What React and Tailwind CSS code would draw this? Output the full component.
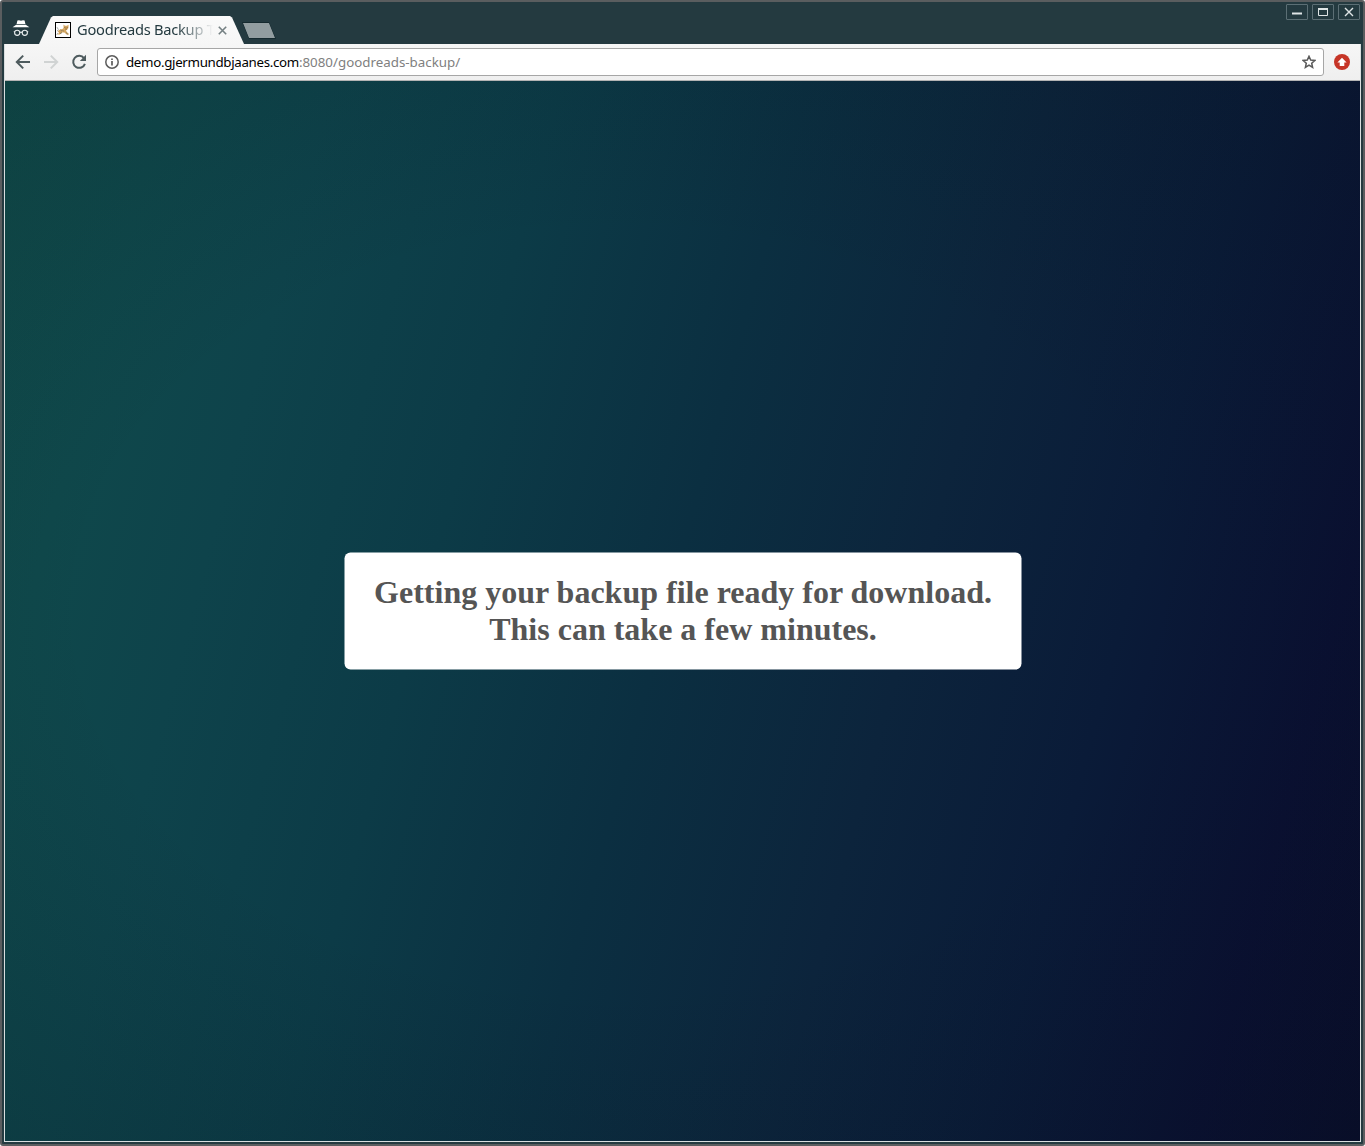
function IncognitoIcon() {
  return (
    <svg className="h-[18px] w-[18px] shrink-0" viewBox="0 0 18 18" fill="none">
      <path d="M5.4 0.6 L7 0.2 L9 0.7 L11 0.2 L12.6 0.6 L13.4 3.9 H4.6 Z" fill="#fff" />
      <path d="M4.2 4.8 H13.8 L17.4 7.3 H0.6 Z" fill="#fff" />
      <circle cx="5.2" cy="12.8" r="2.6" stroke="#e8eced" strokeWidth="1.1" />
      <circle cx="12.8" cy="12.8" r="2.6" stroke="#e8eced" strokeWidth="1.1" />
      <path d="M7.7 12.6 Q9 11.6 10.3 12.6 M1.8 11.6 L2.8 12 M16.2 11.6 L15.2 12" stroke="#e8eced" strokeWidth="1.1" />
    </svg>
  );
}

function TomcatIcon() {
  return (
    <svg className="h-4 w-4 shrink-0" viewBox="0 0 16 16">
      <rect width="16" height="16" fill="#000" />
      <rect x="1" y="1" width="14" height="14" fill="#fff" />
      <path d="M2 5.2 L3.4 7.6 M2 9 L3.4 8 M1.8 12.8 L3 10.8" stroke="#8b8b86" strokeWidth="0.7" fill="none" />
      <path d="M2.6 9.2 L5 7.4 L8 6.8 L8.6 5.6 L8.4 2.6 L10 3.8 L11.8 3.8 L13.6 2.8 L13.4 6 L12.4 7.6 L11 8.6 L11.8 10 L13.8 11.8 L13.4 13 L11.6 12.4 L9.4 10.4 L7 10.6 L4.8 12.6 H2.4 L4.2 10.8 Z" fill="#d8a963" />
      <path d="M5.4 7.8 L7 9.2 M7.6 8 L8.6 9.4 M5 11.6 L7 10.6 M11 10.6 L12.8 12.2" stroke="#76705f" strokeWidth="0.8" fill="none" />
      <path d="M9.4 5.4 H10.4 M11.7 5.4 H12.6 M10.3 7 H11.8" stroke="#5a4227" strokeWidth="0.7" fill="none" />
    </svg>
  );
}

function WindowButton({ children }) {
  return (
    <div className="flex h-4 w-[22px] items-center justify-center rounded-[1px] border border-[#5c6f75]">
      <svg className="h-[14px] w-5" viewBox="0 0 20 14" fill="none" stroke="#dfe5e6">
        {children}
      </svg>
    </div>
  );
}

function TitleBar() {
  return (
    <div className="flex h-[42px] justify-between">
      <div className="flex items-end pl-[8px]">
        <div className="flex h-[28px] items-start pt-[4px]">
          <IncognitoIcon />
        </div>
        <div className="ml-[9px] flex h-[28px] w-[206px] items-center bg-linear-to-b from-[#fafafa] to-[#f6f6f6] pl-[16px] [clip-path:polygon(0_100%,12px_5%,14px_0,191px_0,193px_5%,205px_100%)]">
          <TomcatIcon />
          <div className="mb-[2px] ml-[6px] h-5 w-[138px] overflow-hidden font-['Noto_Sans',sans-serif] text-[14.67px] leading-5 tracking-[-0.25px] whitespace-nowrap text-[#243a40] [mask-image:linear-gradient(to_right,#000_100px,transparent_136px)]">
            Goodreads Backup T
          </div>
          <svg className="ml-[3px] h-[9px] w-[9px] shrink-0" viewBox="0 0 9 9">
            <path d="M0.8 0.8 L8.2 8.2 M8.2 0.8 L0.8 8.2" stroke="#758083" strokeWidth="1.6" />
          </svg>
        </div>
        <div className="mb-[5px] -ml-[3px] h-[17px] w-[34px] bg-[#162a2f] p-px [clip-path:polygon(0_0,27px_0,34px_100%,7px_100%)]">
          <div className="h-full w-full bg-[#929da0] [clip-path:polygon(0_0,26px_0,32px_100%,6px_100%)]" />
        </div>
      </div>
      <div className="flex gap-1 pt-[2px] pr-px">
        <WindowButton>
          <path d="M5 8.5 H15" strokeWidth="2" />
        </WindowButton>
        <WindowButton>
          <path d="M5.5 4 V10.5 H14.5 V4" />
          <path d="M5 4 H15" strokeWidth="2" />
        </WindowButton>
        <WindowButton>
          <path d="M6 3 L14 11 M14 3 L6 11" strokeWidth="1.4" />
        </WindowButton>
      </div>
    </div>
  );
}

function Toolbar() {
  return (
    <div className="flex h-[37px] items-center border-b border-[#b4b4b4] bg-linear-to-b from-[#f6f6f6] to-[#efefef] pl-[10px]">
      <svg className="h-4 w-4" viewBox="0 0 16 16" fill="none" stroke="#4e5b5e" strokeWidth="2">
        <path d="M15 8 H2.2 M8.2 1.6 L1.8 8 L8.2 14.4" />
      </svg>
      <svg className="ml-3 h-4 w-4" viewBox="0 0 16 16" fill="none" stroke="#d0d3d3" strokeWidth="2">
        <path d="M1 8 H13.8 M7.8 1.6 L14.2 8 L7.8 14.4" />
      </svg>
      <svg className="ml-3 h-4 w-4" viewBox="0 0 16 16" fill="none">
        <path d="M13 4.2 A6 6 0 1 0 13.9 9.8" stroke="#4e5b5e" strokeWidth="2" />
        <path d="M15 0.8 V7 H8.8 Z" fill="#4e5b5e" />
      </svg>
      <div className="ml-[10px] flex h-7 w-[1227px] items-center rounded-[3px] border border-[#a6a6a6] bg-white pr-[7px] pl-[7px]">
        <svg className="h-[14px] w-[14px]" viewBox="0 0 14 14" fill="none">
          <circle cx="7" cy="7" r="6.2" stroke="#5c5c5c" strokeWidth="1.5" />
          <path d="M7 6 V10.4 M7 3.4 V4.9" stroke="#5c5c5c" strokeWidth="1.7" />
        </svg>
        <div className="ml-[7px] grow font-['Noto_Sans',sans-serif] text-[13.33px] leading-5 text-[#808080]">
          <span className="tracking-[-0.33px] text-black">demo.gjermundbjaanes.com</span>:8080/goodreads-backup/
        </div>
        <svg className="h-[14px] w-[14px]" viewBox="0 0 14 14" fill="none">
          <path d="M7 1.3 L8.7 5.1 L12.8 5.5 L9.7 8.2 L10.6 12.4 L7 10.2 L3.4 12.4 L4.3 8.2 L1.2 5.5 L5.3 5.1 Z" stroke="#5a5a5a" strokeWidth="1.5" />
        </svg>
      </div>
      <svg className="ml-[10px] h-4 w-4" viewBox="0 0 16 16">
        <circle cx="8" cy="8" r="8" fill="#c63527" />
        <path d="M8 3.8 L12.6 8.6 H10.3 V12 H5.7 V8.6 H3.4 Z" fill="#fff" />
      </svg>
    </div>
  );
}

function Page() {
  return (
    <div className="flex grow items-center justify-center bg-[radial-gradient(ellipse_at_45%_50%,transparent_50%,rgba(6,18,24,0.2)_100%),linear-gradient(105deg,#104b4a_0%,#0f484b_10%,#0e434b_20%,#0c3b47_34%,#0b2f41_49%,#0c243c_64%,#0a1b38_77%,#0a1032_90%,#090d2c_100%)]">
      <div className="flex h-[117px] w-[677px] translate-x-[0.5px] -translate-y-[0.5px] items-center justify-center rounded-[6px] bg-white text-center font-['Liberation_Serif',serif] text-[32px] leading-[37px] font-bold text-[#555]">
        <h1>
          Getting your backup file ready for download.
          <br />
          This can take a few minutes.
        </h1>
      </div>
    </div>
  );
}

export default function App() {
  return (
    <div className="h-[1146px] w-[1365px] overflow-hidden bg-white">
      <div className="flex h-full flex-col rounded-[3px] border-2 border-[#5a5d5f] bg-[#243a40] pr-[2px] pb-[2px] pl-[2px]">
        <TitleBar />
        <div className="flex grow flex-col border-r border-b border-l border-[#d8dedf]">
          <Toolbar />
          <Page />
        </div>
      </div>
    </div>
  );
}
